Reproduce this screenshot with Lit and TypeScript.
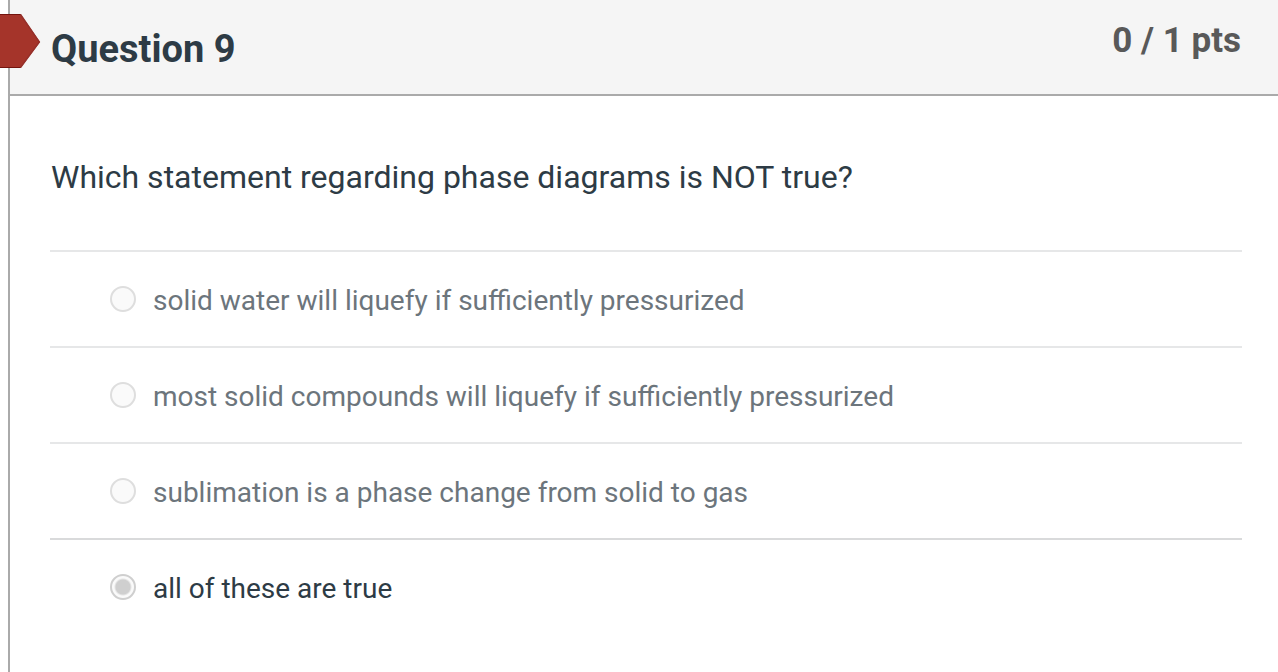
import { LitElement, html, css } from "lit";
import { customElement, state } from "lit/decorators.js";

@customElement("app-root")
export class AppRoot extends LitElement {
  static styles = css`
    :host {
      display: block;
      min-height: 100vh;
      background: #fff;
      color: #2d3b45;
      font-family: Roboto, sans-serif;
    }
    * { box-sizing: border-box; }
    .question {
      position: relative;
      min-height: 100vh;
      margin-left: 8px;
      border-left: 2px solid #aaa;
    }
    .flag {
      position: absolute;
      left: -10px;
      top: 13px;
      width: 41px;
      height: 56px;
      display: block;
    }
    .header {
      display: flex;
      justify-content: space-between;
      align-items: flex-start;
      padding: 17px 37px 21px 41px;
      background: #f5f5f5;
      border-bottom: 2px solid #aaa;
    }
    .title {
      margin: 8px 0 0;
      font-size: 38px;
      line-height: 48px;
      font-weight: 700;
    }
    .points {
      font-size: 35px;
      line-height: 48px;
      font-weight: 700;
      color: #595959;
    }
    .body { padding: 56px 36px 0 40px; }
    .answers {
      margin: 0;
      padding: 0;
      border: 0;
      min-width: 0;
    }
    .prompt {
      padding: 0 0 0 1px;
      margin-bottom: 48px;
      font-size: 32px;
      line-height: 50px;
    }
    .answer {
      display: flex;
      align-items: center;
      gap: 17px;
      min-height: 96px;
      padding: 4px 0 0 60px;
      border-top: 2px solid #e6e7e8;
      font-size: 28px;
      line-height: 40px;
      color: #6c757c;
    }
    .answer.selected {
      border-top-color: #d9dadb;
      color: #2d3b45;
    }
    .radio {
      appearance: none;
      flex: none;
      width: 26px;
      height: 26px;
      margin: 0 0 4px;
      border: 2px solid #dedede;
      border-radius: 50%;
      background: #fafafa;
    }
    .radio:checked {
      border-color: #cfcfcf;
      background: radial-gradient(circle, #cfcfcf 7px, #fafafa 9px);
    }
  `;

  @state() private selected = 3;

  private options = [
    "solid water will liquefy if sufficiently pressurized",
    "most solid compounds will liquefy if sufficiently pressurized",
    "sublimation is a phase change from solid to gas",
    "all of these are true",
  ];

  render() {
    return html`
      <section class="question">
        <svg class="flag" viewBox="0 0 41 56" aria-hidden="true">
          <path d="M-2 1H20.5L40 29L20.5 55H-2Z" fill="#a5342a" />
          <path d="M20.5 1.5L39.3 29L20.5 54.5" fill="none" stroke="#96302a" stroke-width="1.5" />
          <path d="M0 1.5H20.5M0 54.5H20.5" fill="none" stroke="#74140e" stroke-width="1.2" />
        </svg>
        <header class="header">
          <h1 class="title">Question 9</h1>
          <div class="points">0 / 1 pts</div>
        </header>
        <div class="body">
          <div class="prompt" id="prompt">Which statement regarding phase diagrams is NOT true?</div>
          <fieldset class="answers" aria-labelledby="prompt">
            ${this.options.map(
              (text, i) => html`
                <label class="answer ${i === this.selected ? "selected" : ""}">
                  <input class="radio" type="radio" name="answer" .checked=${i === this.selected} disabled />
                  <span>${text}</span>
                </label>
              `
            )}
          </fieldset>
        </div>
      </section>
    `;
  }
}
